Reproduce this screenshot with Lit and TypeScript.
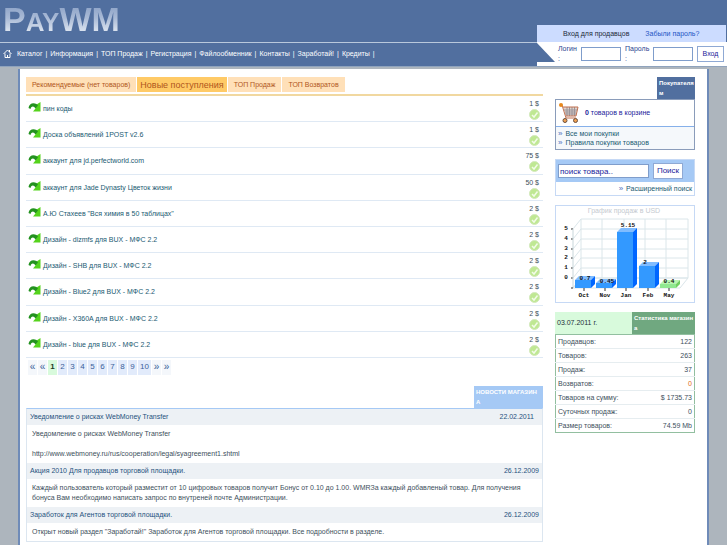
import { LitElement, html, svg, css } from "lit";
import { customElement } from "lit/decorators.js";
import { classMap } from "lit/directives/class-map.js";

const NAV = ["Каталог", "Информация", "ТОП Продаж", "Регистрация", "Файлообменник", "Контакты", "Заработай!", "Кредиты"];

const TABS = ["Рекомендуемые (нет товаров)", "Новые поступления", "ТОП Продаж", "ТОП Возвратов"];

const GOODS: [string, string][] = [
  ["пин коды", "1 $"],
  ["Доска объявлений 1POST v2.6", "1 $"],
  ["аккаунт для jd.perfectworld.com", "75 $"],
  ["аккаунт для Jade Dynasty Цветок жизни", "50 $"],
  ['А.Ю Стахеев "Вся химия в 50 таблицах"', "2 $"],
  ["Дизайн - dizmfs для BUX - МФС 2.2", "2 $"],
  ["Дизайн - SHB для BUX - МФС 2.2", "2 $"],
  ["Дизайн - Blue2 для BUX - МФС 2.2", "2 $"],
  ["Дизайн - X360A для BUX - МФС 2.2", "2 $"],
  ["Дизайн - blue для BUX - МФС 2.2", "2 $"],
];

const PAGES = ["«", "«", "1", "2", "3", "4", "5", "6", "7", "8", "9", "10", "»", "»"];

const NEWS = [
  {
    title: "Уведомление о рисках WebMoney Transfer",
    date: "22.02.2011",
    body: ["Уведомление о рисках WebMoney Transfer", "http://www.webmoney.ru/rus/cooperation/legal/syagreement1.shtml"],
  },
  {
    title: "Акция 2010 Для продавцов торговой площадки.",
    date: "26.12.2009",
    body: [
      "Каждый пользователь который разместит от 10 цифровых товаров получит Бонус от 0.10 до 1.00. WMRЗа каждый добавленый товар. Для получения бонуса Вам необходимо написать запрос по внутреней почте Администрации.",
    ],
  },
  {
    title: "Заработок для Агентов торговой площадки.",
    date: "26.12.2009",
    body: ['Открыт новый раздел "Заработай!" Заработок для Агентов торговой площадки. Все подробности в разделе.'],
  },
];

const STATS: [string, string][] = [
  ["Продавцов:", "122"],
  ["Товаров:", "263"],
  ["Продаж:", "37"],
  ["Возвратов:", "0"],
  ["Товаров на сумму:", "$ 1735.73"],
  ["Суточных продаж:", "0"],
  ["Размер товаров:", "74.59 Mb"],
];

const FONT = css`
  :host {
    display: block;
    font-family: "Liberation Sans", Arial, sans-serif;
    font-size: 7px;
    line-height: 10px;
    color: #3d4f5c;
  }
  * {
    box-sizing: border-box;
  }
  a {
    color: inherit;
    text-decoration: none;
  }
`;

@customElement("site-header")
class SiteHeader extends LitElement {
  static styles = [
    FONT,
    css`
      .bar {
        display: grid;
        grid-template-columns: 1fr 190px;
        grid-template-rows: 25px 17px 24px;
        background: #516f9f;
        border-bottom: 1px solid #8fa3bd;
        color: #fff;
      }
      .logo {
        grid-row: 1 / 3;
        margin: 0;
        padding: 0 3px;
        font-size: 34px;
        line-height: 39px;
        font-weight: 700;
        height: 39px;
        justify-self: start;
        color: transparent;
        background: linear-gradient(#8ea4c8 6px, #a9bad6 18px, #dde5f0 32px);
        background-clip: text;
        -webkit-background-clip: text;
      }
      .small {
        font-size: 26px;
      }
      nav {
        display: flex;
        align-items: center;
        gap: 3px;
        padding: 0 3px 2px;
        border-top: 1px solid #b9c8dc;
        grid-row: 3;
        grid-column: 1;
        white-space: nowrap;
      }
      .home {
        width: 9px;
        height: 9px;
        margin-right: 2px;
      }
      .auth-top {
        grid-column: 2;
        grid-row: 2;
        display: flex;
        gap: 16px;
        align-items: center;
        padding-left: 26px;
        margin-right: 1px;
        background: #ccdcff;
        color: #222a3a;
      }
      .forgot {
        color: #1c55c4;
      }
      .auth {
        grid-column: 2;
        grid-row: 3;
        display: flex;
        align-items: center;
        background: #fff;
        color: #2a3f8f;
        padding-right: 3px;
      }
      .wedge {
        width: 18px;
        height: 20px;
        align-self: flex-start;
        flex: none;
        margin-right: 3px;
      }
      label {
        width: 23px;
        height: 20px;
        flex: none;
      }
      .pass {
        margin-left: 4px;
        width: 28px;
      }
      .colon {
        display: block;
      }
      input {
        width: 40px;
        height: 14px;
        border: 1px solid #7f9dcb;
        background: #fff;
        padding: 0 2px;
        font: inherit;
      }
      button {
        margin-left: auto;
        width: 27px;
        height: 16px;
        padding: 0;
        border: 1px solid #8fa9d4;
        background: #fff;
        color: #22229a;
        font: inherit;
      }
    `,
  ];
  render() {
    return html`<header class="bar">
      <h1 class="logo">P<span class="small">AY</span>WM</h1>
      <nav>
        <svg class="home" viewBox="0 0 9 9" fill="none" stroke="#fff">
          <path d="M0.5 5 L4.5 1 L8.5 5 M2 4.5 V8.5 H7 V4.5 M4.5 6 V8.5 M6.5 1 V3" />
        </svg>
        ${NAV.map((n) => html`<a href="#">${n}</a><span>|</span>`)}
      </nav>
      <div class="auth-top">
        <span>Вход для продавцов</span>
        <a class="forgot" href="#">Забыли пароль?</a>
      </div>
      <form class="auth">
        <svg class="wedge" viewBox="0 0 18 20"><path d="M0 1 L18 20 H0Z" fill="#516f9f" /></svg>
        <label for="login">Логин <span class="colon">:</span></label><input id="login" type="text" />
        <label class="pass" for="pass">Пароль <span class="colon">:</span></label><input id="pass" type="password" />
        <button type="button">Вход</button>
      </form>
    </header>`;
  }
}

@customElement("goods-list")
class GoodsList extends LitElement {
  static styles = [
    FONT,
    css`
      .tabs {
        display: flex;
        gap: 1px;
        padding-bottom: 2px;
        border-bottom: 2px solid #f1d8a0;
      }
      .tab {
        font: inherit;
        border: 0;
        padding: 0 6px;
        height: 15px;
        background: #ffe0b8;
        color: #b0561c;
        white-space: nowrap;
      }
      .tab.on {
        background: #ffca66;
        padding: 0 3px;
        font-size: 9px;
      }
      .list {
        list-style: none;
        margin: 0;
        padding: 0;
        display: grid;
        grid-auto-rows: 1fr;
        min-height: 262px;
      }
      .row {
        display: flex;
        justify-content: space-between;
        border-bottom: 1px solid #dfe9f4;
        padding: 3px 3px 0 2px;
      }
      .name {
        display: flex;
        gap: 2px;
        padding-top: 3px;
        color: #215a72;
      }
      .label {
        padding-top: 2px;
      }
      .arrow {
        width: 13px;
        height: 10px;
      }
      .price {
        display: flex;
        flex-direction: column;
        align-items: flex-end;
        color: #3d4f5c;
      }
      .ok {
        width: 11px;
        height: 11px;
      }
      .amount {
        padding-right: 1px;
      }
      .pages {
        display: flex;
        gap: 1px;
        padding: 2px;
        font-size: 8px;
      }
      .page {
        height: 15px;
        line-height: 14px;
        padding: 0 2px;
        min-width: 9px;
        text-align: center;
        background: #e2ebfb;
        color: #3a5f9a;
      }
      .page.edge {
        background: #f4f7fb;
        padding: 0 1px;
        font-size: 10px;
      }
      .page.current {
        background: #d8fadc;
        color: #1d3a26;
        font-weight: 700;
      }
    `,
  ];
  render() {
    return html`<div class="tabs">
        ${TABS.map((t, i) => html`<button type="button" class=${classMap({ tab: true, on: i === 1 })}>${t}</button>`)}
      </div>
      <ul class="list">
        ${GOODS.map(
          ([name, price]) => html`<li class="row">
            <a class="name" href="#">
              <svg class="arrow" viewBox="0 0 13 10">
                <path d="M7 3.5 L12.500 0 V9.500 H5 L7.500 6.500Z" fill="#55d31c" />
                <path d="M0.500 6 C1 1.500 5 0 8.500 2 L10 3.500 L7.500 6.500 C6 4 3.500 3.500 2.500 7Z" fill="#23921f" />
              </svg>
              <span class="label">${name}</span>
            </a>
            <span class="price">
              <span class="amount">${price}</span>
              <svg class="ok" viewBox="0 0 11 11">
                <circle cx="5.5" cy="5.5" r="5" fill="#bfe893" stroke="#d3e8bc" />
                <path d="M3 6 L5 8 L8.500 3.500" fill="none" stroke="#f2fbe8" stroke-width="1.500" />
              </svg>
            </span>
          </li>`,
        )}
      </ul>
      <nav class="pages">
        ${PAGES.map(
          (p) => html`<a href="#" class=${classMap({ page: true, edge: p === "«" || p === "»", current: p === "1" })}>${p}</a>`,
        )}
      </nav>`;
  }
}

@customElement("shop-news")
class ShopNews extends LitElement {
  static styles = [
    FONT,
    css`
      .head {
        width: 69px;
        height: 22px;
        margin: 0 0 0 auto;
        padding: 1px 5px 1px 2px;
        background: #a5c9f5;
        color: #fff;
        font-size: 6px;
        line-height: 10px;
        font-weight: 700;
        word-break: break-all;
      }
      .box {
        border: 1px solid #dce6f0;
        border-top-color: #a5c9f5;
      }
      .title {
        display: flex;
        justify-content: space-between;
        margin: 0;
        padding: 3px;
        font-size: 7px;
        font-weight: 400;
        background: #edf1f5;
        color: #1f527e;
      }
      .title.wide {
        padding-right: 8px;
      }
      .text {
        padding: 4px 5px;
      }
      p {
        margin: 0 0 10px;
      }
      p:last-child {
        margin: 0;
      }
    `,
  ];
  render() {
    return html`<h2 class="head">НОВОСТИ МАГАЗИНА</h2>
      <div class="box">
        ${NEWS.map(
          (n, i) => html`<h3 class=${classMap({ title: true, wide: i === 0 })}><a href="#">${n.title}</a><span>${n.date}</span></h3>
            <div class="text">${n.body.map((b) => html`<p>${b}</p>`)}</div>`,
        )}
      </div>`;
  }
}

@customElement("sales-chart")
class SalesChart extends LitElement {
  static styles = [
    FONT,
    css`
      figure {
        margin: 0;
        border: 1px solid #c6d9f5;
      }
      .chart {
        display: block;
        width: 100%;
      }
      .heading {
        font-size: 7px;
        fill: #c5cad0;
        text-anchor: middle;
      }
      .tick {
        font: 700 6px "Liberation Mono", monospace;
        fill: #111;
        text-anchor: middle;
      }
    `,
  ];
  private bars = [
    { x: 19, y: 74, name: "Oct", v: "0.7", lx: 29, ly: 74 },
    { x: 40, y: 77, name: "Nov", v: "0.45", lx: 51, ly: 77 },
    { x: 61, y: 26, name: "Jan", v: "5.15", lx: 72, ly: 21 },
    { x: 83, y: 60, name: "Feb", v: "2", lx: 89, ly: 58 },
    { x: 104, y: 78, name: "May", v: "0.4", lx: 113, ly: 77 },
  ];
  render() {
    const levels = [23, 33, 43, 52, 62, 72];
    return html`<figure>
      <svg class="chart" viewBox="0 0 138 96">
        <text class="heading" x="68" y="7">График продаж в USD</text>
        <path
          d="M17 82 L25 72 H132 L124 82Z M25 13 H132 V72 M25 13 V72 M46 13 V72 M68 13 V72 M89 13 V72 M110 13 V72 M17 23 L25 13"
          fill="none"
          stroke="#dbe6ea"
        />
        ${levels.map(
          (y, i) => svg`<path d="M17 ${y + 10} L25 ${y} H132" fill="none" stroke="#dbe6ea" />
            <path d="M15 ${y} H17" stroke="#333" />
            <text class="tick" x="10" y=${y + 1}>${5 - i}</text>`,
        )}
        <path d="M17 23 V82" stroke="#c8d6da" />
        <path d="M15 82 H17" stroke="#333" />
        ${this.bars.map((b) => {
          const c = b.name === "May" ? ["#90e890", "#b8f4b0", "#70d060"] : ["#3399ff", "#80bcff", "#0066ff"];
          return svg`<rect x=${b.x} y=${b.y} width="16" height=${82 - b.y} fill=${c[0]} />
            <path d="M${b.x} ${b.y} l4 -4 h16 l-4 4Z" fill=${c[1]} />
            <path d="M${b.x + 16} ${b.y} l4 -4 V78 l-4 4Z" fill=${c[2]} />
            <path d="M${b.x + 9} 82 v3" stroke="#333" />
            <text class="tick" x=${b.lx} y=${b.ly}>${b.v}</text>
            <text class="tick" x=${b.x + 9} y="91">${b.name}</text>`;
        })}
      </svg>
    </figure>`;
  }
}

@customElement("side-column")
class SideColumn extends LitElement {
  static styles = [
    FONT,
    css`
      :host {
        display: flex;
        flex-direction: column;
        gap: 9px;
      }
      h2 {
        margin: 0;
        font-size: 6px;
        line-height: 10px;
        padding: 1px 0 1px 2px;
        color: #fff;
        word-break: break-all;
      }
      .buyers {
        width: 38px;
        height: 22px;
        margin-left: auto;
        background: #516f9f;
      }
      .panel {
        border: 1px solid #8a9cba;
      }
      .cart {
        display: flex;
        align-items: center;
        gap: 6px;
        height: 27px;
        padding-left: 3px;
        border-bottom: 1px solid #86b0ea;
        color: #22229a;
      }
      .cart-icon {
        width: 20px;
        height: 20px;
      }
      .links {
        padding: 2px;
        background: #f5f8fb;
        color: #215a72;
      }
      .links a {
        display: flex;
        gap: 3px;
        line-height: 9px;
      }
      .mark {
        color: #4a6fc0;
        font-size: 8px;
      }
      .search {
        border: 1px solid #c6d9f5;
      }
      .fields {
        display: flex;
        gap: 4px;
        padding: 3px 2px;
        background: #a5c9f5;
        font-size: 8px;
      }
      .query {
        flex: 1;
        min-width: 0;
        margin: 1px 0;
        height: 14px;
        padding: 0 1px;
        border: 1px solid #7f9dcb;
        background: #fff;
        color: #22229a;
        font: inherit;
      }
      .go {
        width: 30px;
        height: 16px;
        margin-right: 9px;
        padding: 0;
        border: 1px solid #8fa9d4;
        background: #fff;
        color: #22229a;
        font: inherit;
      }
      .more {
        display: flex;
        justify-content: flex-end;
        gap: 3px;
        padding: 1px 2px;
        line-height: 11px;
        color: #215a72;
      }
      .stat-head {
        display: grid;
        grid-template-columns: 1fr 63px;
      }
      .date {
        padding: 6px 2px;
        background: #d8fadc;
        color: #22303a;
      }
      .stat-title {
        background: #70a880;
      }
      table {
        width: 100%;
        border: 1px solid #92bfa0;
        border-collapse: collapse;
        font-size: 7px;
      }
      th,
      td {
        height: 14px;
        padding: 0 2px;
        font-weight: 400;
        text-align: left;
        border-bottom: 1px solid #e6edf0;
        white-space: nowrap;
      }
      tr:last-child > * {
        border-bottom-color: #92bfa0;
      }
      td {
        text-align: right;
      }
      .alert {
        color: #e06a10;
      }
    `,
  ];
  render() {
    return html`<section>
        <h2 class="buyers">Покупателям</h2>
        <div class="panel">
          <div class="cart">
            <svg class="cart-icon" viewBox="0 0 20 20" fill="none">
              <path d="M4 4 L19 4 L17 13 H7Z" fill="#e0d4cc" />
              <path
                d="M5 7 H18 M6 9 H17 M6 11 H17 M8 4 V13 M10.500 4 V13 M13 4 V13 M15.500 4 V13"
                stroke="#9a949a"
              />
              <path d="M1 2 H3 L7 15 H17 M4 4 H19 L17 13 H7" stroke="#c07050" />
              <circle cx="2" cy="2" r="2" fill="#e8881c" />
              <circle cx="6" cy="17.500" r="2" fill="#f0a050" stroke="#6a5040" />
              <circle cx="16.500" cy="17.500" r="2" fill="#f0a050" stroke="#6a5040" />
            </svg>
            <span><b>0</b> товаров в корзине</span>
          </div>
          <div class="links">
            <a href="#"><span class="mark">»</span><span>Все мои покупки</span></a>
            <a href="#"><span class="mark">»</span><span>Правила покупки товаров</span></a>
          </div>
        </div>
      </section>
      <form class="search">
        <div class="fields">
          <input class="query" type="text" aria-label="поиск товара" value="поиск товара.." />
          <button class="go" type="button">Поиск</button>
        </div>
        <a class="more" href="#"><span class="mark">»</span><span>Расширенный поиск</span></a>
      </form>
      <sales-chart></sales-chart>
      <section>
        <div class="stat-head">
          <span class="date">03.07.2011 г.</span>
          <h2 class="stat-title">Статистика магазина</h2>
        </div>
        <table>
          <tbody>
            ${STATS.map(
              ([k, v], i) => html`<tr>
                <th scope="row">${k}</th>
                <td class=${classMap({ alert: i === 3 })}>${v}</td>
              </tr>`,
            )}
          </tbody>
        </table>
      </section>`;
  }
}

@customElement("app-root")
class AppRoot extends LitElement {
  static styles = [
    FONT,
    css`
      :host {
        display: flex;
        flex-direction: column;
        min-height: 100vh;
        background: #adb5bd;
      }
      .page {
        flex: 1;
        display: grid;
        grid-template-columns: minmax(0, 1fr) 140px;
        gap: 12px;
        margin: 2px 18px 0;
        padding: 8px 12px 3px 6px;
        background: #fff;
        border: solid #6f8bb8;
        border-width: 0 2px;
      }
      main {
        display: flex;
        flex-direction: column;
        gap: 9px;
      }
    `,
  ];
  render() {
    return html`<site-header></site-header>
      <div class="page">
        <main>
          <goods-list></goods-list>
          <shop-news></shop-news>
        </main>
        <side-column></side-column>
      </div>`;
  }
}
